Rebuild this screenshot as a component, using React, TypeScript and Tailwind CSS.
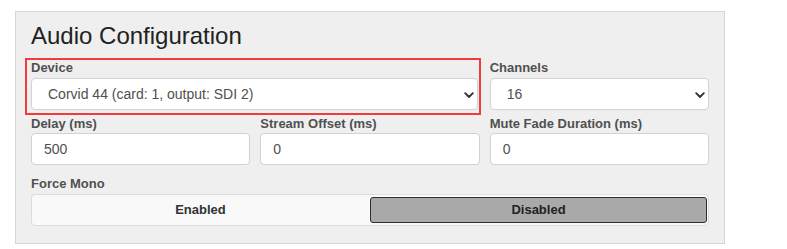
import React from "react";

const font = { fontFamily: '"Liberation Sans", Arial, sans-serif' };

function Label({ children }: { children: React.ReactNode }) {
  return <div className="text-[13px] leading-[16px] font-bold text-[#505050]">{children}</div>;
}

function SelectBox({ value }: { value: string }) {
  return (
    <div className="relative mt-[2px] h-[32px] rounded-[4px] border border-[#d2d2d2] bg-white">
      <div className="flex h-full items-center pl-[16px] text-[14px] text-[#505050]">{value}</div>
      <svg width="10" height="7" viewBox="0 0 10 7" className="pointer-events-none absolute right-[3px] top-[12.5px]">
        <path d="M1.2 1.2 L5 5 L8.8 1.2" fill="none" stroke="#333" strokeWidth="1.9" strokeLinecap="round" strokeLinejoin="round" />
      </svg>
    </div>
  );
}

function InputBox({ value }: { value: string }) {
  return (
    <div className="mt-[1px] flex h-[32px] items-center rounded-[4px] border border-[#d2d2d2] bg-white pl-[12px] text-[14px] text-[#505050]">
      {value}
    </div>
  );
}

export default function App() {
  return (
    <div className="min-h-[249px] w-[787px] bg-white" style={font}>
      <div className="pl-[15px] pt-[11px]">
        <div className="w-[710px] border border-[#d6d6d6] bg-[#efefef] px-[15px] pt-[12px] pb-[17px]">
          <div className="text-[24px] leading-[24px] text-[#222]">Audio Configuration</div>
          <div className="mt-[12px] grid grid-cols-3 gap-x-[10px] gap-y-[6px]">
            <div className="relative col-span-2 mr-[2px]">
              <div className="pointer-events-none absolute -left-[6px] -right-[3px] -top-[2px] -bottom-[5px] border-2 border-[#f23a3f]" />
              <Label>Device</Label>
              <SelectBox value="Corvid 44 (card: 1, output: SDI 2)" />
            </div>
            <div>
              <Label>Channels</Label>
              <SelectBox value="16" />
            </div>
            <div>
              <Label>Delay (ms)</Label>
              <InputBox value="500" />
            </div>
            <div>
              <Label>Stream Offset (ms)</Label>
              <InputBox value="0" />
            </div>
            <div>
              <Label>Mute Fade Duration (ms)</Label>
              <InputBox value="0" />
            </div>
          </div>
          <div className="mt-[11px]">
            <Label>Force Mono</Label>
            <div className="mt-[2px] flex h-[32px] items-center gap-[2px] rounded-[4px] border border-[#dcdcdc] bg-[#f9f9f9] px-[1px]">
              <div className="flex h-[26px] flex-1 items-center justify-center text-[13px] font-bold text-[#333]">Enabled</div>
              <div className="flex h-[26px] flex-1 items-center justify-center rounded-[3px] border border-[#2e2e2e] bg-[#a9a9a9] text-[13px] font-bold text-[#222]">Disabled</div>
            </div>
          </div>
        </div>
      </div>
    </div>
  );
}
